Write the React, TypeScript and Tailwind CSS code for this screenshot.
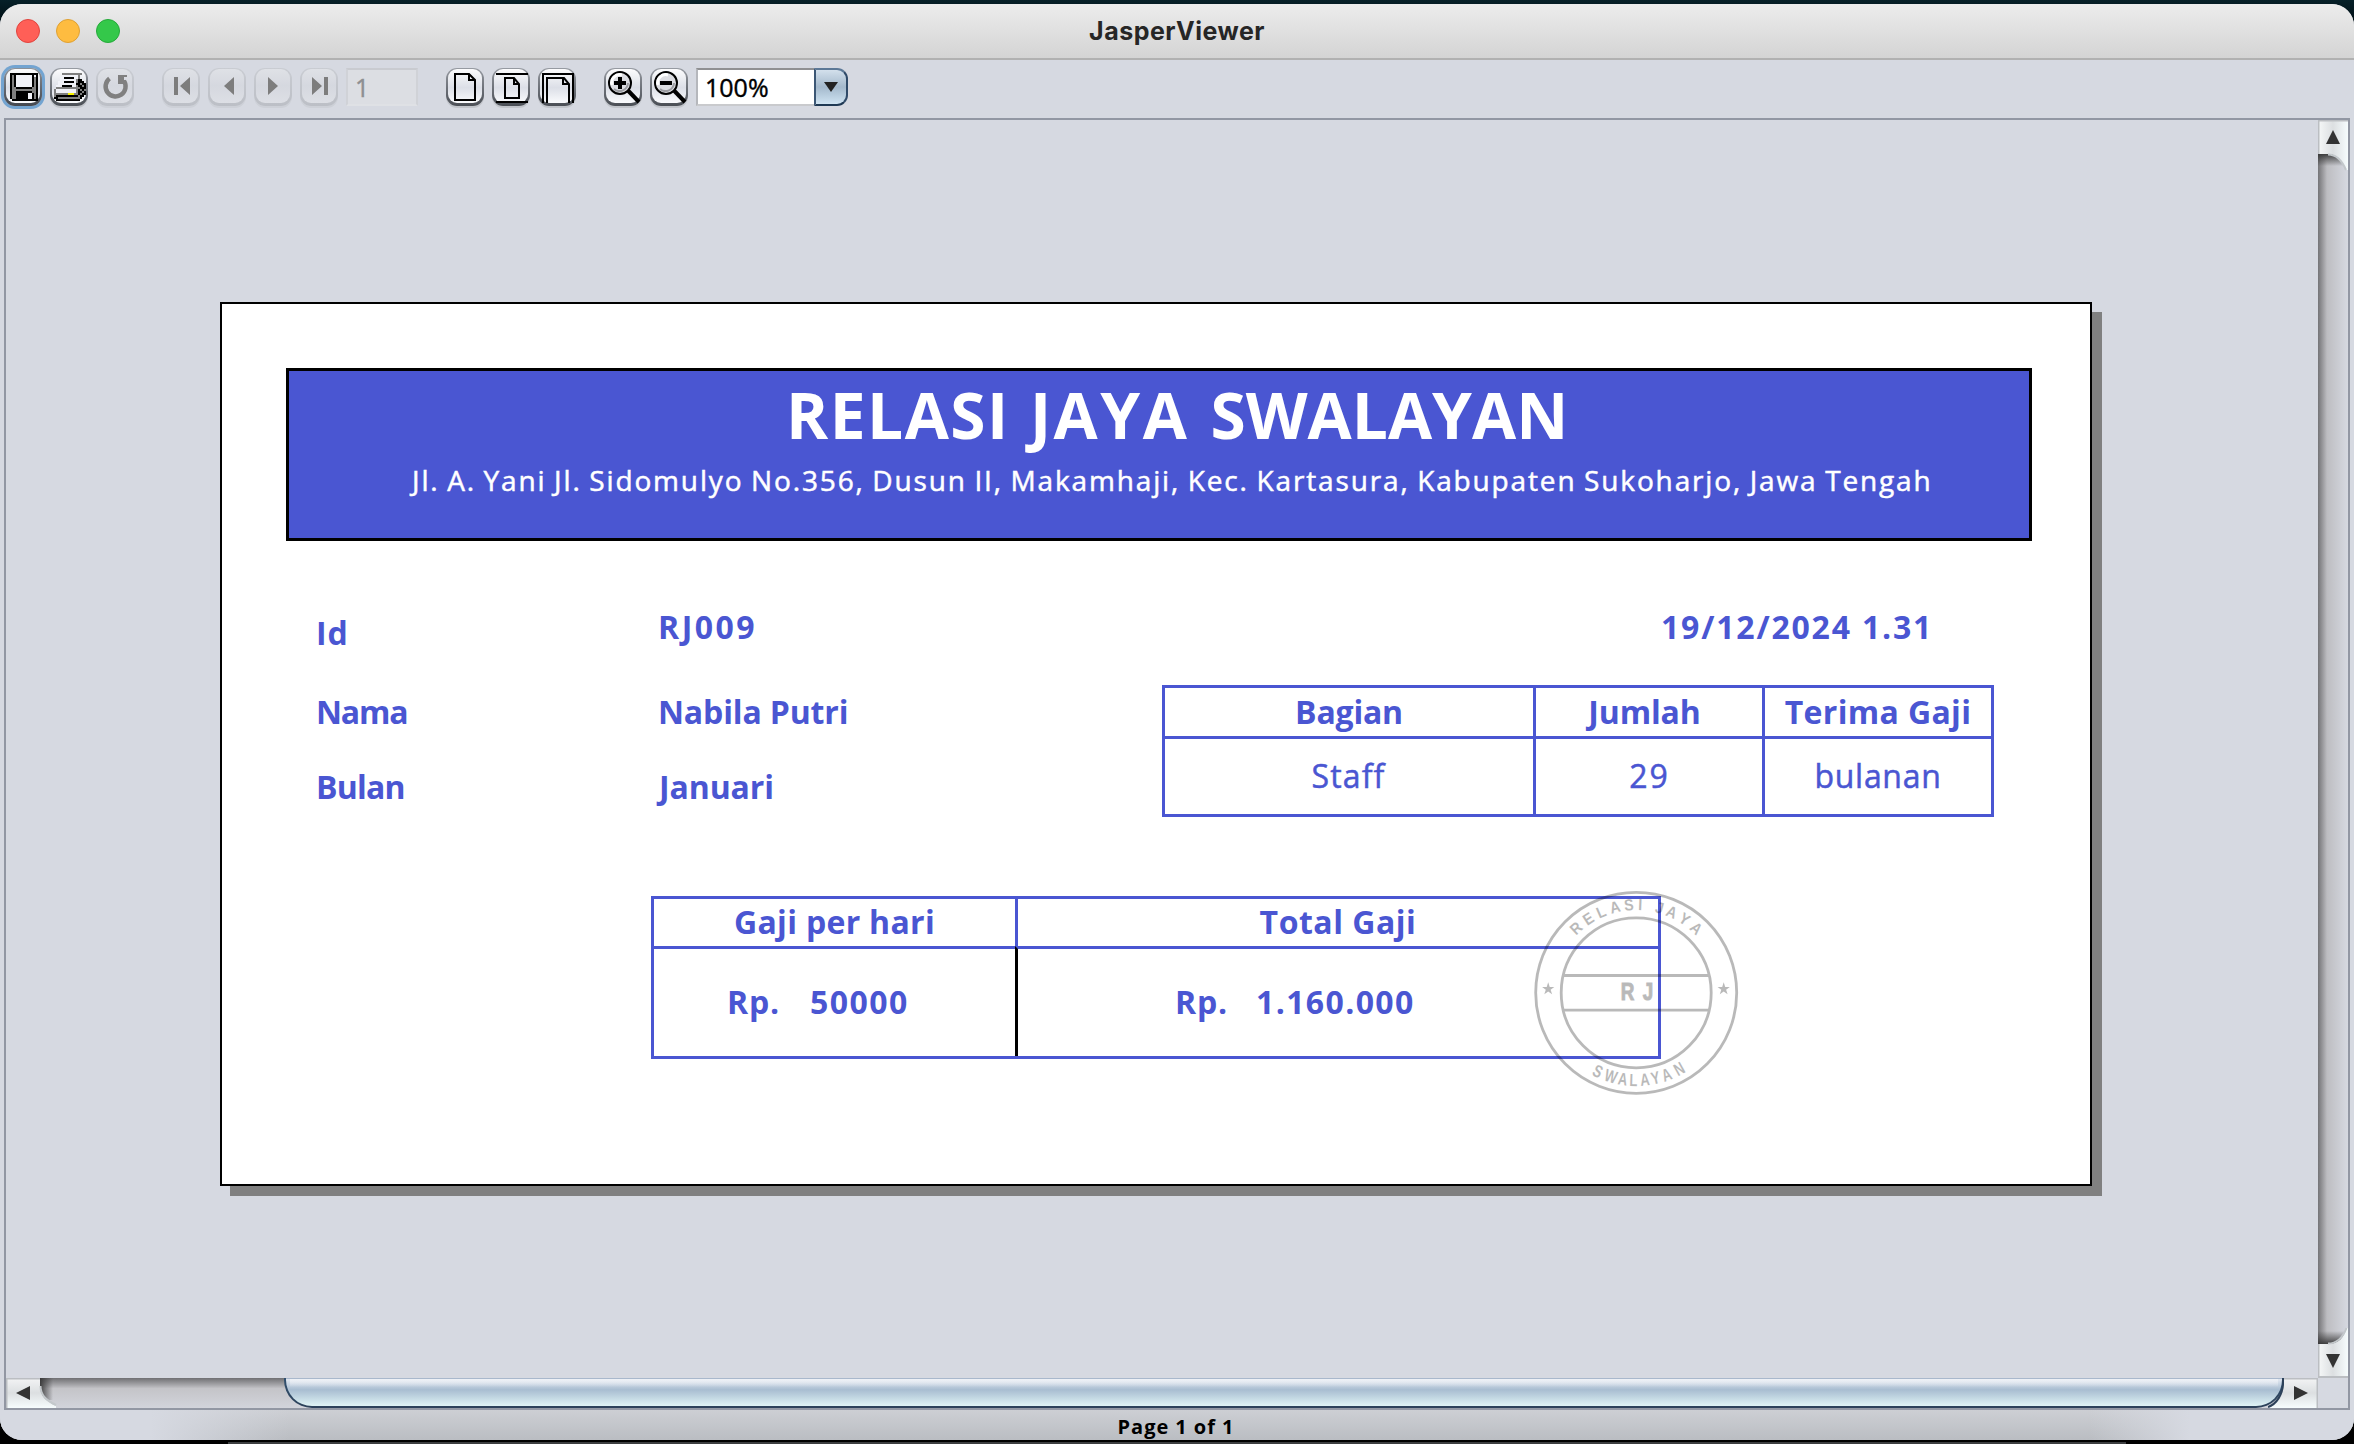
import React from "react";
import type { ReactNode } from "react";

/* ---------- toolbar icons ---------- */

const PIXEL_COLORS: Record<string, string> = {
  "#": "#000000",
  g: "#808080",
  w: "#f1f2f8",
  y: "#f5f000",
};

const FLOPPY = [
  "##############",
  "#g#wwwwwwww#w#",
  "#g#wwwwwwww#g#",
  "#g#wwwwwwww#g#",
  "#g#wwwwwwww#g#",
  "#g#wwwwwwww#g#",
  "#g#wwwwwwww#g#",
  "#gg########gg#",
  "#gggggggggggg#",
  "#gg########gg#",
  "#gg######ww#g#",
  "#gg######ww#g#",
  "#gg######ww#g#",
  ".#############",
];

const PRINTER = [
  "....gggggggggg..",
  "....wwwwwwwwg...",
  "...ww#####wwg...",
  "...wwwwwwwwg##..",
  "..www#####wg###.",
  "..wwwwwwwww##g##",
  ".www#####wwg##g#",
  ".gggggggggggg###",
  "gwwwwwwwwwwg#g#g",
  "gwwwwwwwwwwg##g#",
  "gggggggyyygg#g##",
  "g###########g##.",
  "##ggggggggggg#..",
  ".############...",
];

function PixelIcon({ rows, className }: { rows: string[]; className: string }) {
  return (
    <svg className={className} viewBox={`0 0 ${rows[0].length} ${rows.length}`} shapeRendering="crispEdges">
      {rows.flatMap((row, y) =>
        row
          .split("")
          .map((c, x) =>
            PIXEL_COLORS[c] ? <rect key={`${x}-${y}`} x={x} y={y} width={1} height={1} fill={PIXEL_COLORS[c]} /> : null,
          ),
      )}
    </svg>
  );
}

function Glyph({ children }: { children: ReactNode }) {
  return (
    <svg className="block size-[38px]" viewBox="0 0 38 38" fill="none">
      {children}
    </svg>
  );
}

function Magnifier({ plus }: { plus?: boolean }) {
  return (
    <Glyph>
      <circle cx="16" cy="14" r="11" fill="#dcdde2" stroke="#000" strokeWidth="2" />
      <path d="M8 16a8 8 0 0 1 10-10" stroke="#fff" strokeWidth="3" />
      <path d="M10 20a8.500 8.500 0 0 0 14-6" stroke="#9b9ca1" strokeWidth="2" />
      <path d="M10 14h12" stroke="#000" strokeWidth="4" />
      {plus && <path d="M16 8v12" stroke="#000" strokeWidth="4" />}
      <path d="M24 21.500 35 33" stroke="#000" strokeWidth="4" />
    </Glyph>
  );
}

/* ---------- window chrome ---------- */

function ToolButton({ children, disabled, focused }: { children: ReactNode; disabled?: boolean; focused?: boolean }) {
  return (
    <button
      className={
        disabled
          ? "size-[38px] shrink-0 rounded-[11px] bg-linear-to-b from-[#c9ccd2] to-[#bcbfc6] p-[2px] shadow-[0_2px_0_#cdd0d7]"
          : focused
            ? "size-[38px] shrink-0 rounded-[11px] bg-linear-to-b from-[#8d9299] to-[#43474f] p-[2px] shadow-[0_0_0_3px_#73a4d1]"
            : "size-[38px] shrink-0 rounded-[11px] bg-linear-to-b from-[#979ba2] to-[#4b4f56] p-[2px] shadow-[0_2px_0_#c1c4ca]"
      }
    >
      <span
        className={
          disabled
            ? "block size-[34px] rounded-[9px] bg-linear-to-b from-[#dfe1e6] via-[#d5d8df] to-[#dddfe5]"
            : "block size-[34px] rounded-[9px] bg-linear-to-b from-[#fcfcfd] via-[#dcdfe7] via-55% to-[#fafbfd]"
        }
      >
        <span className="-m-[2px] block size-[38px]">{children}</span>
      </span>
    </button>
  );
}

function TitleBar() {
  return (
    <header className="flex h-14 shrink-0 items-center border-b-2 border-[#b1b1b1] bg-linear-to-b from-[#ececec] to-[#d4d4d4] px-4">
      <div className="flex flex-1 gap-4">
        <span className="size-6 rounded-full border border-[#e0443e] bg-[#ff5f57]" />
        <span className="size-6 rounded-full border border-[#dea033] bg-[#febc40]" />
        <span className="size-6 rounded-full border border-[#25a93a] bg-[#34c84a]" />
      </div>
      <h1 className="font-[Inter] text-[25px] leading-none font-bold tracking-[0.5px] text-[#262626]">
        JasperViewer
      </h1>
      <div className="flex-1" />
    </header>
  );
}

function Toolbar() {
  return (
    <div className="flex h-[58px] shrink-0 items-start gap-7 pt-2 pl-1">
      <div className="flex gap-2">
        <ToolButton focused>
          <PixelIcon rows={FLOPPY} className="ml-[6px] block h-8 w-7 pt-1" />
        </ToolButton>
        <ToolButton>
          <PixelIcon rows={PRINTER} className="ml-1 block h-8 w-8 pt-1" />
        </ToolButton>
        <ToolButton disabled>
          <Glyph>
            <path d="M13.500 9.500A10 10 0 1 0 28 12" stroke="#808080" strokeWidth="4.500" />
            <path d="M22 6h9v2h-3v3h2v4h-8z" fill="#808080" />
          </Glyph>
        </ToolButton>
      </div>

      <div className="flex gap-2">
        <ToolButton disabled>
          <Glyph>
            <path d="M12 8h4v18h-4zM18 17 28 8v18z" fill="#7d7d7d" />
          </Glyph>
        </ToolButton>
        <ToolButton disabled>
          <Glyph>
            <path d="M16 17 26 8v18z" fill="#7d7d7d" />
          </Glyph>
        </ToolButton>
        <ToolButton disabled>
          <Glyph>
            <path d="M24 17 14 8v18z" fill="#7d7d7d" />
          </Glyph>
        </ToolButton>
        <ToolButton disabled>
          <Glyph>
            <path d="M22 17 12 8v18zM24 8h4v18h-4z" fill="#7d7d7d" />
          </Glyph>
        </ToolButton>
        <div className="h-[38px] w-[72px] border-2 border-t-[#c9cbd0] border-r-[#d0d2d7] border-b-[#dfe1e5] border-l-[#d0d2d7] bg-[#dcdee3] pl-[7px] text-[25px] leading-[34px] text-[#8e8f92] [-webkit-text-stroke:0.4px]">
          1
        </div>
      </div>

      <div className="flex gap-2">
        <ToolButton>
          <Glyph>
            <path d="M9 5h14l6 6v20H9z" stroke="#000" strokeWidth="2" />
            <path d="M23 5v6h6" stroke="#000" strokeWidth="2" />
          </Glyph>
        </ToolButton>
        <ToolButton>
          <Glyph>
            <path d="M4 5h32M4 33h32" stroke="#000" strokeWidth="2" />
            <path d="M13 9h9l5 6v14H13z" stroke="#000" strokeWidth="2" />
            <path d="M22 9v6h5" stroke="#000" strokeWidth="2" />
          </Glyph>
        </ToolButton>
        <ToolButton>
          <Glyph>
            <path d="M5 34V5h30v29" stroke="#000" strokeWidth="2" />
            <path d="M9 34V9h17l5 6v19M25 9v6h6" stroke="#000" strokeWidth="2" />
          </Glyph>
        </ToolButton>
      </div>

      <div className="flex gap-2">
        <ToolButton>
          <Magnifier plus />
        </ToolButton>
        <ToolButton>
          <Magnifier />
        </ToolButton>
        <div className="flex h-[38px] w-[152px]">
          <div className="w-[118px] border-t-2 border-b-2 border-l-2 border-t-[#8f9093] border-b-[#c9cacd] border-l-[#b5b7bc] bg-white pl-[7px] text-[25px] leading-[34px] text-black [-webkit-text-stroke:0.4px]">
            100%
          </div>
          <div className="flex w-[34px] items-center justify-center rounded-r-[11px] border-2 border-t-[#5c7896] border-r-[#2f4a68] border-b-[#1f3954] border-l-[#3c5775] bg-linear-to-b from-[#d3e0ec] via-[#a4b9cc] to-[#cfe3f2]">
            <svg className="h-[10px] w-[14px]" viewBox="0 0 14 10">
              <path d="M0 0h14L7 10z" fill="#222" />
            </svg>
          </div>
        </div>
      </div>
    </div>
  );
}

/* ---------- scroll bars ---------- */

function VerticalScrollBar() {
  return (
    <div className="flex w-[30px] shrink-0 flex-col justify-between bg-linear-to-r from-[#747477] via-[#bdbdc1] via-30% to-[#d6d9e1]">
      <svg className="block h-[52px] w-[30px]" viewBox="0 0 30 52">
        <defs>
          <linearGradient id="vbtn" x1="0" x2="1">
            <stop offset="0" stopColor="#f6f8f8" />
            <stop offset="0.5" stopColor="#dcdfe1" />
            <stop offset="1" stopColor="#f6fcfd" />
          </linearGradient>
          <linearGradient id="vshade" x1="0" x2="0" y1="0" y2="1">
            <stop offset="0" stopColor="#333" stopOpacity="0.900" />
            <stop offset="1" stopColor="#333" stopOpacity="0" />
          </linearGradient>
        </defs>
        <path d="M0 34h28v12H0z" fill="url(#vshade)" />
        <path d="M0 0h30v50h-2C25 42 20 34 10 34H0z" fill="url(#vbtn)" />
        <path d="M10 34.500c9 0 14 6 18 15.500" fill="none" stroke="#c3c8cb" strokeWidth="2" />
        <path d="M0 0h30v1.500H1.500V34H0z" fill="#bbbec2" />
        <path d="M8 24h14L15 10z" fill="#333" />
      </svg>
      <svg className="block h-[52px] w-[30px]" viewBox="0 0 30 52">
        <path d="M0 18V5h28v13z" fill="url(#vshade)" transform="matrix(1 0 0 -1 0 23)" />
        <path d="M0 51h30V2h-1c-3 9-8 16-19 16H0z" fill="url(#vbtn)" />
        <path d="M10 17.500C19 17.500 25 11 28.500 2" fill="none" stroke="#c3c8cb" strokeWidth="2" />
        <path d="M0 18h1.500v32H30v2H0z" fill="#bbbec2" />
        <path d="M8 28h14l-7 14z" fill="#333" />
      </svg>
    </div>
  );
}

function HorizontalScrollBar() {
  return (
    <div className="flex h-[30px] shrink-0">
      <div className="flex flex-1 justify-between bg-linear-to-b from-[#707073] via-[#c4c4c8] via-35% to-[#d2d4db]">
        <svg className="block h-[30px] w-[56px]" viewBox="0 0 56 30">
          <defs>
            <linearGradient id="hbtn" x1="0" x2="0" y1="0" y2="1">
              <stop offset="0" stopColor="#f3f4f5" />
              <stop offset="0.500" stopColor="#dcdfe1" />
              <stop offset="1" stopColor="#f6fcfd" />
            </linearGradient>
            <linearGradient id="hshade" x1="0" x2="1">
              <stop offset="0" stopColor="#333" stopOpacity="0.900" />
              <stop offset="1" stopColor="#333" stopOpacity="0" />
            </linearGradient>
          </defs>
          <path d="M34 0h13v22H34z" fill="url(#hshade)" />
          <path d="M0 0h34v8c0 10 7 16 16 20v2H0z" fill="url(#hbtn)" />
          <path d="M34.500 8c0 10 7 15 15.500 19" fill="none" stroke="#c3c8cb" strokeWidth="2" />
          <path d="M0 0h34v1.500H1.500V30H0z" fill="#bbbec2" />
          <path d="M10 15 24 8v14z" fill="#333" />
        </svg>
        <div className="flex">
          <div className="h-[30px] w-[2000px] rounded-b-[28px] bg-linear-to-b from-[#31506f] to-[#2c4159] px-[2px] pb-[2px]">
            <div className="h-full rounded-b-[26px] border-t border-[#a9b8cc] bg-linear-to-b from-[#dde4ee] from-5% via-[#a8bdd1] via-40% to-[#e0f4f5]">
              <div className="mx-1 h-2 bg-linear-to-b from-[#eef1f6] to-transparent" />
            </div>
          </div>
          <svg className="-ml-4 block h-[30px] w-[50px]" viewBox="0 0 50 30">
            <path d="M16 0h34v30H0C9 27 16 17 16 5z" fill="url(#hbtn)" />
            <path d="M15 0v6C14.500 16 9 26 0 29" fill="none" stroke="#2c4159" strokeWidth="2" />
            <path d="M16 0h34v30h-1.500V1.500H16z" fill="#bbbec2" />
            <path d="M26 8v14l14-7z" fill="#333" />
          </svg>
        </div>
      </div>
      <div className="w-[30px] bg-[#d6d9e1]" />
    </div>
  );
}

/* ---------- report ---------- */

/* [letter, degrees clockwise from the top of the seal] */
const SEAL_TOP: [string, number][] = [
  ["R", -43],
  ["E", -32.8],
  ["L", -23.4],
  ["A", -14],
  ["S", -4.8],
  ["I", 2.6],
  ["J", 15.4],
  ["A", 23.7],
  ["Y", 33.3],
  ["A", 43],
];

/* [letter, degrees counter-clockwise from the bottom of the seal] */
const SEAL_BOTTOM: [string, number][] = [
  ["S", -26.1],
  ["W", -16.9],
  ["A", -8.8],
  ["L", -1.8],
  ["A", 5.7],
  ["Y", 12.8],
  ["A", 20.4],
  ["N", 29.4],
];

function Stamp() {
  return (
    <svg
      className="absolute top-[585px] left-[1310px] size-[208px] opacity-[0.270]"
      viewBox="0 0 208 208"
      fill="none"
      stroke="#000"
    >
      <g transform="translate(104.2 103.8)">
        <circle r="100.500" strokeWidth="2.800" />
        <circle r="75" strokeWidth="2.800" />
        <path d="M-72.700-17.300H72.700M-72.700 17.400H72.700" strokeWidth="2.800" />
        <g fill="#000" stroke="none" fontFamily="Liberation Sans" fontWeight="700" textAnchor="middle">
          {SEAL_TOP.map(([letter, angle]) => (
            <text key={angle} fontSize="16" transform={`rotate(${angle}) translate(0 -82.7) scale(0.9 1)`}>
              {letter}
            </text>
          ))}
          {SEAL_BOTTOM.map(([letter, angle]) => (
            <text key={angle} fontSize="17.500" transform={`rotate(${-angle}) translate(0 93.3) scale(0.75 1)`}>
              {letter}
            </text>
          ))}
          <text fontSize="23" stroke="#000" transform="translate(0.8 7.500) scale(0.82 1)" wordSpacing="4">
            R J
          </text>
          <path d="m-88-10.500 1.500 4.600h4.600l-3.700 2.800 1.500 4.600-3.900-2.800-3.900 2.800 1.500-4.600-3.700-2.800h4.600z" />
          <path d="m87.500-10.500 1.500 4.600h4.600l-3.700 2.800 1.500 4.600-3.900-2.800-3.900 2.800 1.500-4.600-3.700-2.800H86z" />
        </g>
      </g>
    </svg>
  );
}

function ReportHeader() {
  return (
    <div className="mt-16 ml-16 h-[173px] w-[1746px] border-[3px] border-black bg-[#4a56d2] pt-1 whitespace-nowrap text-white">
      <h2 className="ml-[497px] text-[64px] leading-[80px] font-bold [word-spacing:2px]">
        <span className="tracking-[1.490px]">RELASI </span>
        <span className="tracking-[2.500px]">JAYA </span>
        <span className="tracking-[0px]">SWALAYAN</span>
      </h2>
      <p className="mt-[5px] ml-[123px] text-[28px] leading-10 tracking-[1.860px] [word-spacing:-1.5px] [-webkit-text-stroke:0.5px]">
        Jl. A. Yani Jl. Sidomulyo No.356, Dusun II, Makamhaji, Kec. Kartasura, Kabupaten Sukoharjo, Jawa Tengah
      </p>
    </div>
  );
}

function PositionTable() {
  return (
    <div className="mt-[38px] grid h-[132px] w-[832px] grid-cols-[371px_229px_229px] grid-rows-[51px_78px] border-r-[3px] border-b-[3px] border-[#4a56d2] text-center *:border-t-[3px] *:border-l-[3px] *:border-[#4a56d2]">
      <div className="pt-1 font-bold tracking-[-0.200px]">Bagian</div>
      <div className="pt-1 pr-[9px] font-bold tracking-[-0.100px]">Jumlah</div>
      <div className="pt-1 font-bold tracking-[0.340px]">Terima Gaji</div>
      <div className="pt-[17px] pr-px tracking-[1.100px] [-webkit-text-stroke:0.5px]">Staff</div>
      <div className="pt-[17px] pl-px tracking-[2px] [-webkit-text-stroke:0.5px]">29</div>
      <div className="pt-[17px] tracking-[0.700px] [-webkit-text-stroke:0.5px]">bulanan</div>
    </div>
  );
}

function SalaryTable() {
  return (
    <div className="ml-[429px] grid h-[163px] w-[1010px] grid-cols-[364px_643px] grid-rows-[50px_110px] border-r-[3px] border-b-[3px] border-[#4a56d2] font-bold *:border-t-[3px] *:border-l-[3px] *:border-[#4a56d2]">
      <div className="pt-[3px] text-center tracking-[0.310px]">Gaji per hari</div>
      <div className="pt-[3px] text-center tracking-[0.510px]">Total Gaji</div>
      <div className="flex pt-[33px] pl-[73px]">
        <span className="w-[83px] tracking-[0.800px]">Rp.</span>
        <span className="tracking-[1.450px]">50000</span>
      </div>
      <div className="flex border-l-black! pt-[33px] pl-[157px]">
        <span className="w-[81px] tracking-[0.800px]">Rp.</span>
        <span className="tracking-[1.370px]">1.160.000</span>
      </div>
    </div>
  );
}

function ReportPage() {
  return (
    <article className="relative mt-[182px] ml-[214px] h-[884px] w-[1872px] border-2 border-black bg-white text-[32px] leading-10 text-[#4a56d2] shadow-[10px_10px_0_#808080]">
      <ReportHeader />
      <section className="ml-[94px] flex h-[355px]">
        <div className="flex w-[342px] flex-col font-bold">
          <span className="mt-[72px] tracking-[0.910px]">Id</span>
          <span className="mt-[39px] tracking-[-1.200px]">Nama</span>
          <span className="mt-[35px] tracking-[-0.800px]">Bulan</span>
        </div>
        <div className="flex w-[504px] flex-col font-bold">
          <span className="mt-[66px] tracking-[2.500px]">RJ009</span>
          <span className="mt-[45px] tracking-[-0.150px]">Nabila Putri</span>
          <span className="mt-[35px] ml-px tracking-[-0.100px]">Januari</span>
        </div>
        <div>
          <p className="mt-[66px] ml-[499px] font-bold tracking-[1.800px]">19/12/2024 1.31</p>
          <PositionTable />
        </div>
      </section>
      <SalaryTable />
      <Stamp />
    </article>
  );
}

export default function App() {
  return (
    <div className="flex h-[1444px] w-[2354px] flex-col bg-linear-to-b from-[#062028] from-0% via-black via-5% to-black pt-1 font-['Open_Sans',sans-serif]">
      <div className="flex h-[1436px] shrink-0 flex-col overflow-hidden rounded-[22px] bg-[#d6d9e1]">
        <TitleBar />
        <Toolbar />
        <main className="mx-1 flex h-[1292px] shrink-0 flex-col border-2 border-[#9297a3]">
          <div className="flex h-[1258px] shrink-0">
            <div className="flex-1">
              <ReportPage />
            </div>
            <VerticalScrollBar />
          </div>
          <HorizontalScrollBar />
        </main>
        <footer className="flex flex-1 items-center justify-center bg-[linear-gradient(90deg,#d6d9e1_150px,#d6d9e100_290px,#d6d9e100_2090px,#d6d9e1_2190px),linear-gradient(180deg,#cdcfd4,#babdc2)] pt-[3px] pr-[2px] text-[20px] leading-none font-bold tracking-[0.950px] text-black">
          Page 1 of 1
        </footer>
      </div>
      <div className="mx-[228px] mt-[2px] h-[2px] bg-[#3c3e40]" />
    </div>
  );
}
